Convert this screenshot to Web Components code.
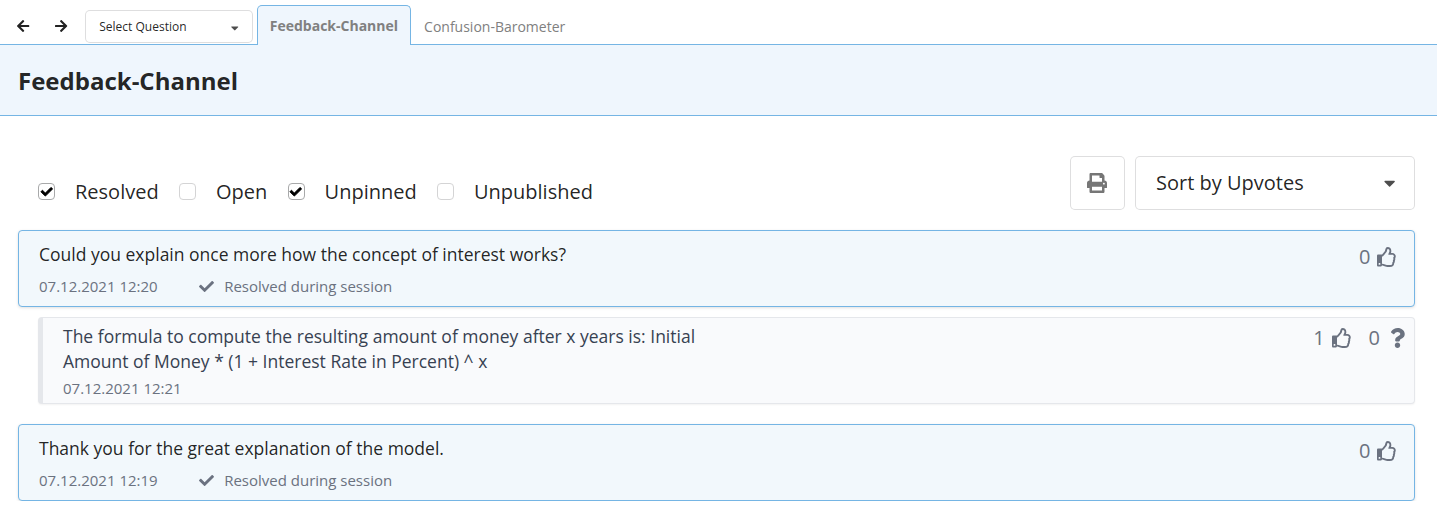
<!DOCTYPE html>
<html lang="en">
<head>
<meta charset="utf-8">
<title>Feedback-Channel</title>
<style>
html,body{margin:0;background:#fff}
body{font-family:"Open Sans","Noto Sans",sans-serif;color:rgba(0,0,0,.87);font-size:14px}
</style>
</head>
<body>
<feedback-page></feedback-page>
<script>
const ICONS={
 left:[448,'M257.5 445.1l-22.2 22.2c-9.4 9.4-24.6 9.4-33.9 0L7 273c-9.4-9.4-9.4-24.6 0-33.9L201.4 44.7c9.4-9.4 24.6-9.4 33.9 0l22.2 22.2c9.5 9.5 9.3 25-.4 34.3L136.6 216H424c13.3 0 24 10.7 24 24v32c0 13.3-10.7 24-24 24H136.6l120.5 114.8c9.8 9.3 10 24.8.4 34.3z'],
 right:[448,'M190.5 66.9l22.2-22.2c9.4-9.4 24.6-9.4 33.9 0L441 239c9.4 9.4 9.4 24.6 0 33.9L246.6 467.3c-9.4 9.4-24.6 9.4-33.9 0l-22.2-22.2c-9.5-9.5-9.3-25 .4-34.3L311.4 296H24c-13.3 0-24-10.7-24-24v-32c0-13.3 10.7-24 24-24h287.4L190.9 101.2c-9.8-9.3-10-24.8-.4-34.3z'],
 check:[512,'M173.898 439.404l-166.4-166.4c-9.997-9.997-9.997-26.206 0-36.204l36.203-36.204c9.997-9.998 26.207-9.998 36.204 0L192 312.69 432.095 72.596c9.997-9.997 26.207-9.997 36.204 0l36.203 36.204c9.997 9.997 9.997 26.206 0 36.204l-294.4 294.401c-9.998 9.997-26.207 9.997-36.204-.001z'],
 caret:[320,'M31.3 192h257.3c17.8 0 26.7 21.5 14.1 34.1L174.1 354.8c-7.8 7.8-20.5 7.8-28.3 0L17.2 226.1C4.6 213.5 13.5 192 31.3 192z'],
 print:[512,'M448 192V77.25c0-8.49-3.37-16.62-9.37-22.63L393.37 9.37c-6-6-14.14-9.37-22.63-9.37H96C78.33 0 64 14.33 64 32v160c-35.35 0-64 28.65-64 64v112c0 8.84 7.16 16 16 16h48v96c0 17.67 14.33 32 32 32h320c17.67 0 32-14.33 32-32v-96h48c8.84 0 16-7.16 16-16V256c0-35.35-28.65-64-64-64zm-64 256H128v-96h256v96zm0-224H128V64h192v48c0 8.84 7.16 16 16 16h48v96zm48 72c-13.25 0-24-10.75-24-24 0-13.26 10.75-24 24-24s24 10.74 24 24c0 13.25-10.75 24-24 24z'],
 thumb:[512,'M466.27 286.69C475.04 271.84 480 256 480 236.85c0-44.015-37.218-85.58-85.82-85.58H357.7c4.92-12.81 8.85-28.13 8.85-46.54C366.55 31.936 328.86 0 271.28 0c-61.607 0-58.093 94.933-71.76 108.6-22.747 22.747-49.615 66.447-68.76 83.4H32c-17.673 0-32 14.327-32 32v240c0 17.673 14.327 32 32 32h64c14.893 0 27.408-10.174 30.978-23.95 44.509 1.001 75.06 39.94 177.802 39.94 7.22 0 15.22.01 22.22.01 77.117 0 111.986-39.423 112.94-95.33 13.319-18.425 20.299-43.122 17.34-66.99 9.854-18.452 13.664-40.343 8.99-62.99zm-61.75 53.83c12.56 21.13 1.26 49.41-13.94 57.57 7.7 48.78-17.608 65.9-53.12 65.9h-37.82c-71.639 0-118.029-37.82-171.64-37.82V240h10.92c28.36 0 67.98-70.89 94.54-97.46 28.36-28.36 18.91-75.63 37.82-94.54 47.27 0 47.27 32.98 47.27 56.73 0 39.17-28.36 56.72-28.36 94.54h103.99c21.11 0 37.73 18.91 37.82 37.82.09 18.9-12.82 37.81-22.27 37.81 13.489 14.555 16.371 45.236-5.21 65.62zM88 432c0 13.255-10.745 24-24 24s-24-10.745-24-24 10.745-24 24-24 24 10.745 24 24z'],
 question:[384,'M202.021 0C122.202 0 70.503 32.703 29.914 91.026c-7.363 10.58-5.093 25.086 5.178 32.874l43.138 32.709c10.373 7.865 25.132 6.026 33.253-4.148 25.049-31.381 43.63-49.449 82.757-49.449 30.764 0 68.816 19.799 68.816 49.631 0 22.552-18.617 34.134-48.993 51.164-35.423 19.86-82.299 44.576-82.299 106.405V320c0 13.255 10.745 24 24 24h72.471c13.255 0 24-10.745 24-24v-5.773c0-42.86 125.268-44.645 125.268-160.627C377.504 66.256 286.902 0 202.021 0zM192 373.459c-38.196 0-69.271 31.075-69.271 69.271 0 38.195 31.075 69.27 69.271 69.27s69.271-31.075 69.271-69.271-31.075-69.27-69.271-69.27z']
};
function define(name,html){
  const t=document.createElement('template');
  t.innerHTML=html;
  customElements.define(name,class extends HTMLElement{
    constructor(){super();this.attachShadow({mode:'open'}).append(t.content.cloneNode(true));}
  });
}
customElements.define('ui-icon',class extends HTMLElement{
  connectedCallback(){
    if(this.shadowRoot)return;
    const [w,d]=ICONS[this.getAttribute('name')];
    this.attachShadow({mode:'open'}).innerHTML=
      `<style>:host{display:block;flex:none;line-height:0}svg{display:block;height:var(--size,14px);width:auto;overflow:visible;fill:currentColor;stroke:currentColor;stroke-width:var(--stroke,0)}</style><svg viewBox="0 0 ${w} 512"><path d="${d}"/></svg>`;
  }
});
define('ui-select',`<style>
:host{display:flex;align-items:center;justify-content:space-between;box-sizing:border-box;border:1px solid rgba(34,36,38,.15);border-radius:5px;background:#fff}
ui-icon{opacity:.8;margin-top:var(--caret-drop,0)}
</style><slot></slot><ui-icon name="caret"></ui-icon>`);
define('nav-tab',`<style>
:host{display:flex;align-items:center;box-sizing:border-box;height:40px;margin-bottom:-1px;padding:2px 12px 0;border:1px solid transparent;border-bottom:0;border-radius:5px 5px 0 0;font-size:14px;line-height:20px;color:#808080}
:host([active]){background:#eff6fd;border-color:#75b5e4;font-weight:700;padding-top:0}
</style><slot></slot>`);
define('nav-bar',`<style>
:host{display:flex;align-items:flex-end;box-sizing:border-box;height:45px;border-bottom:1px solid #75b5e4}
.arrows{display:flex;gap:25.75px;padding:0 17.5px 11px 17px;--size:14px;color:#222}
ui-select{width:168px;height:33px;margin:0 4px 1px 0;padding:0 13px 0 13.5px;font-size:12px;--size:12px;--caret-drop:3px}
</style><div class="arrows"><ui-icon name="left"></ui-icon><ui-icon name="right"></ui-icon></div>
<ui-select>Select Question</ui-select><slot></slot>`);
define('page-title',`<style>
:host{display:flex;align-items:center;box-sizing:border-box;height:71px;padding:2px 18px 0;background:#eff6fd;border-bottom:1px solid #75b5e4}
h1{margin:0;font-size:24px;line-height:32px;font-weight:700}
</style><h1><slot></slot></h1>`);
define('filter-check',`<style>
:host{display:flex;align-items:center;gap:20px;font-size:20px;line-height:28px}
.box{display:flex;align-items:center;justify-content:center;box-sizing:border-box;width:17px;height:17px;border:1px solid #d4d4d5;border-radius:4px;background:#fff;color:#000;--size:11.5px;--stroke:36px}
ui-icon{display:none}
:host([checked]) .box{border-color:#a8a9aa}
:host([checked]) ui-icon{display:block}
</style><span class="box"><ui-icon name="check"></ui-icon></span><span><slot></slot></span>`);
define('filter-bar',`<style>
:host{display:flex;align-items:center;justify-content:space-between;height:54px;margin-left:20px}
.checks{display:flex;gap:20.3px;padding-top:17px}
.tools{display:flex;gap:10px}
button{display:flex;align-items:center;justify-content:center;width:55px;height:54px;box-sizing:border-box;padding:0 1px 0 0;border:1px solid rgba(34,36,38,.15);border-radius:5px;background:#fff;color:#767676;--size:20px}
ui-select{width:280px;height:54px;padding:0 19px 2px 20px;font-size:20px;--size:18px;--caret-drop:2px}
</style><div class="checks"><slot></slot></div>
<div class="tools"><button aria-label="Print"><ui-icon name="print"></ui-icon></button><ui-select>Sort by Upvotes</ui-select></div>`);
define('vote-count',`<style>
:host{display:flex;align-items:center;gap:7px;font-size:20px;line-height:28px;color:#6b7280;--size:20px}
:host([wide]){gap:10px}
</style><slot></slot>`);
define('feedback-card',`<style>
:host{display:flex;justify-content:space-between;box-sizing:border-box;height:77px;padding:9px 16.6px 0 20px;border:1px solid #75b5e4;border-radius:4px;background:#f2f8fc;box-shadow:0 1px 3px rgba(0,0,0,.12)}
.text{font-size:17.5px;line-height:28px}
.meta{display:flex;align-items:center;margin-top:8px;font-size:15px;line-height:20px;color:#6b7280;--size:15px}
.meta ui-icon{margin:0 10.5px 0 41px}
.votes{margin-top:3px}
</style><div><div class="text"><slot></slot></div>
<div class="meta"><slot name="date"></slot><ui-icon name="check"></ui-icon><span>Resolved during session</span></div></div>
<div class="votes"><slot name="votes"></slot></div>`);
define('feedback-reply',`<style>
:host{display:flex;justify-content:space-between;box-sizing:border-box;height:87px;padding:6px 9px 0 20px;border:1px solid #e5e7eb;border-left-width:5px;border-radius:4px;background:#f9fafc;box-shadow:0 1px 2px rgba(0,0,0,.05)}
.text{width:640px;font-size:17.5px;line-height:25px;color:#374151}
.date{margin-top:4px;font-size:15px;line-height:20px;color:#6b7280}
.votes{display:flex;gap:17px;height:28px}
</style><div><div class="text"><slot></slot></div><div class="date"><slot name="date"></slot></div></div>
<div class="votes"><slot name="votes"></slot></div>`);
define('feedback-page',`<style>
:host{display:block}
main{padding:40px 22px 0 18px;display:flex;flex-direction:column}
.list{display:flex;flex-direction:column;margin-top:20px}
feedback-reply{margin:10px 0 20px 20px}
</style>
<nav-bar><nav-tab active>Feedback-Channel</nav-tab><nav-tab>Confusion-Barometer</nav-tab></nav-bar>
<page-title>Feedback-Channel</page-title>
<main>
<filter-bar><filter-check checked>Resolved</filter-check><filter-check>Open</filter-check><filter-check checked>Unpinned</filter-check><filter-check>Unpublished</filter-check></filter-bar>
<div class="list">
<feedback-card>Could you explain once more how the concept of interest works?<span slot="date">07.12.2021 12:20</span><vote-count slot="votes">0<ui-icon name="thumb"></ui-icon></vote-count></feedback-card>
<feedback-reply>The formula to compute the resulting amount of money after x years is: Initial Amount of Money * (1 + Interest Rate in Percent) ^ x<span slot="date">07.12.2021 12:21</span><vote-count slot="votes">1<ui-icon name="thumb"></ui-icon></vote-count><vote-count slot="votes" wide>0<ui-icon name="question"></ui-icon></vote-count></feedback-reply>
<feedback-card>Thank you for the great explanation of the model.<span slot="date">07.12.2021 12:19</span><vote-count slot="votes">0<ui-icon name="thumb"></ui-icon></vote-count></feedback-card>
</div>
</main>`);
</script>
</body>
</html>
